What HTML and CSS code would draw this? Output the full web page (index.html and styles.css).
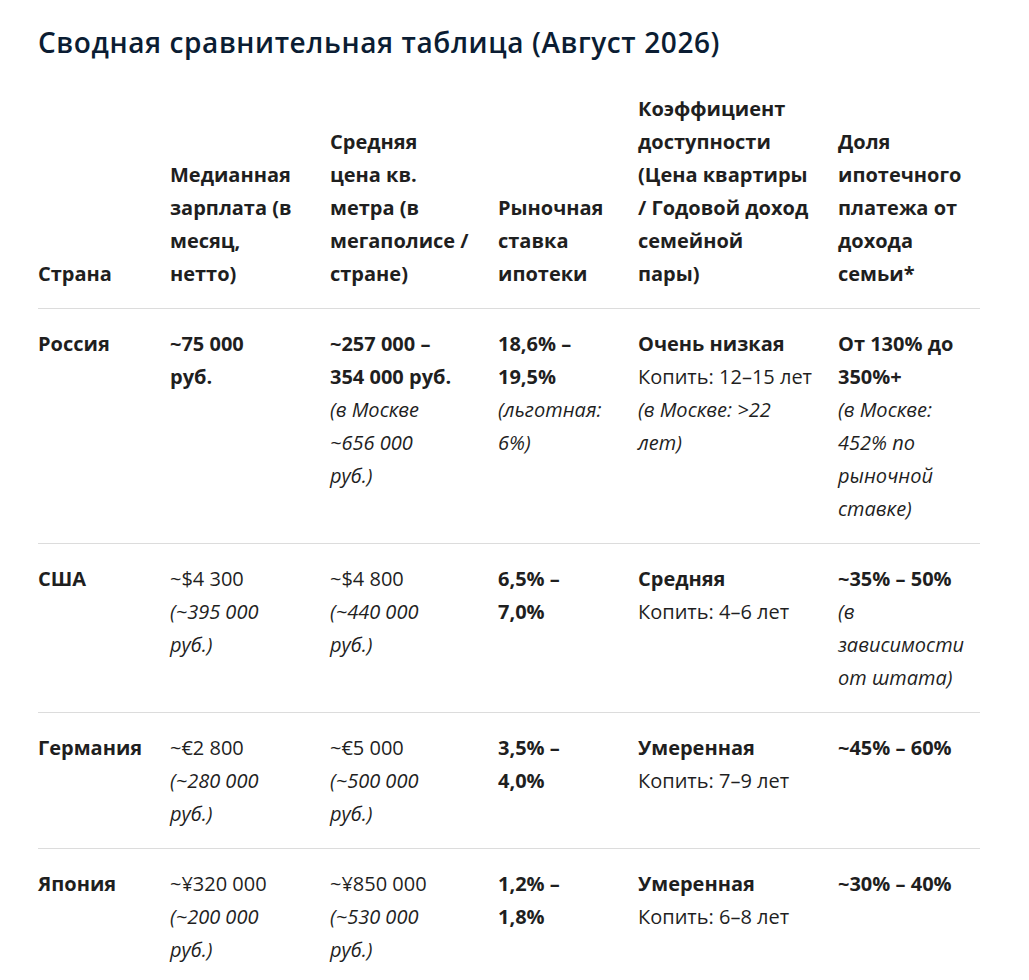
FILE: index.html
```html
<!DOCTYPE html>
<html lang="ru">
<head>
<meta charset="utf-8">
<title>Сводная сравнительная таблица</title>
<link rel="stylesheet" href="styles.css">
</head>
<body>
<main class="page">
  <h2 class="title">Сводная сравнительная таблица (Август 2026)</h2>
  <table class="cmp">
    <colgroup>
      <col class="c1"><col class="c2"><col class="c3"><col class="c4"><col class="c5"><col class="c6">
    </colgroup>
    <thead>
      <tr>
        <th>Страна</th>
        <th>Медианная<br>зарплата (в<br>месяц,<br>нетто)</th>
        <th>Средняя<br>цена кв.<br>метра (в<br>мегаполисе /<br>стране)</th>
        <th>Рыночная<br>ставка<br>ипотеки</th>
        <th>Коэффициент<br>доступности<br>(Цена квартиры<br>/ Годовой доход<br>семейной<br>пары)</th>
        <th>Доля<br>ипотечного<br>платежа от<br>дохода<br>семьи*</th>
      </tr>
    </thead>
    <tbody>
      <tr>
        <td><b>Россия</b></td>
        <td><b>~75 000<br>руб.</b></td>
        <td><b>~257 000 –<br>354 000 руб.</b><br><i>(в Москве<br>~656 000<br>руб.)</i></td>
        <td><b>18,6% –<br>19,5%</b><br><i>(льготная:<br>6%)</i></td>
        <td><b>Очень низкая</b><br>Копить: 12–15 лет<br><i>(в Москве: &gt;22<br>лет)</i></td>
        <td><b>От 130% до<br>350%+</b><br><i>(в Москве:<br>452% по<br>рыночной<br>ставке)</i></td>
      </tr>
      <tr>
        <td><b>США</b></td>
        <td>~$4 300<br><i>(~395 000<br>руб.)</i></td>
        <td>~$4 800<br><i>(~440 000<br>руб.)</i></td>
        <td><b>6,5% –<br>7,0%</b></td>
        <td><b>Средняя</b><br>Копить: 4–6 лет</td>
        <td><b>~35% – 50%</b><br><i>(в<br>зависимости<br>от штата)</i></td>
      </tr>
      <tr>
        <td><b>Германия</b></td>
        <td>~€2 800<br><i>(~280 000<br>руб.)</i></td>
        <td>~€5 000<br><i>(~500 000<br>руб.)</i></td>
        <td><b>3,5% –<br>4,0%</b></td>
        <td><b>Умеренная</b><br>Копить: 7–9 лет</td>
        <td><b>~45% – 60%</b></td>
      </tr>
      <tr>
        <td><b>Япония</b></td>
        <td>~¥320 000<br><i>(~200 000<br>руб.)</i></td>
        <td>~¥850 000<br><i>(~530 000<br>руб.)</i></td>
        <td><b>1,2% –<br>1,8%</b></td>
        <td><b>Умеренная</b><br>Копить: 6–8 лет</td>
        <td><b>~30% – 40%</b></td>
      </tr>
    </tbody>
  </table>
</main>
</body>
</html>
```

FILE: styles.css
```css
html, body {
  margin: 0;
  padding: 0;
  background: #ffffff;
}

.page {
  padding: 23px 0 0 38px;
  font-family: "Open Sans", "Noto Sans", sans-serif;
  color: #1f1f1f;
}

.title {
  margin: 0;
  font-size: 28px;
  line-height: 38px;
  font-weight: 600;
  letter-spacing: 0.6px;
  color: #0b1d33;
}

.cmp {
  margin-top: 13px;
  width: 942px;
  border-collapse: collapse;
  table-layout: fixed;
  font-size: 20px;
  line-height: 33px;
}

.c1 { width: 132px; }
.c2 { width: 160px; }
.c3 { width: 168px; }
.c4 { width: 140px; }
.c5 { width: 200px; }
.c6 { width: 142px; }

.cmp th,
.cmp td {
  padding: 18px 8px 18px 0;
  text-align: left;
  white-space: nowrap;
}

.cmp th {
  vertical-align: bottom;
  font-weight: 700;
  border-bottom: 1px solid #dcdcdc;
}

.cmp td {
  vertical-align: top;
  font-weight: 400;
  border-bottom: 1px solid #dcdcdc;
}

.cmp b {
  font-weight: 700;
}

.cmp i {
  font-style: italic;
}
```
